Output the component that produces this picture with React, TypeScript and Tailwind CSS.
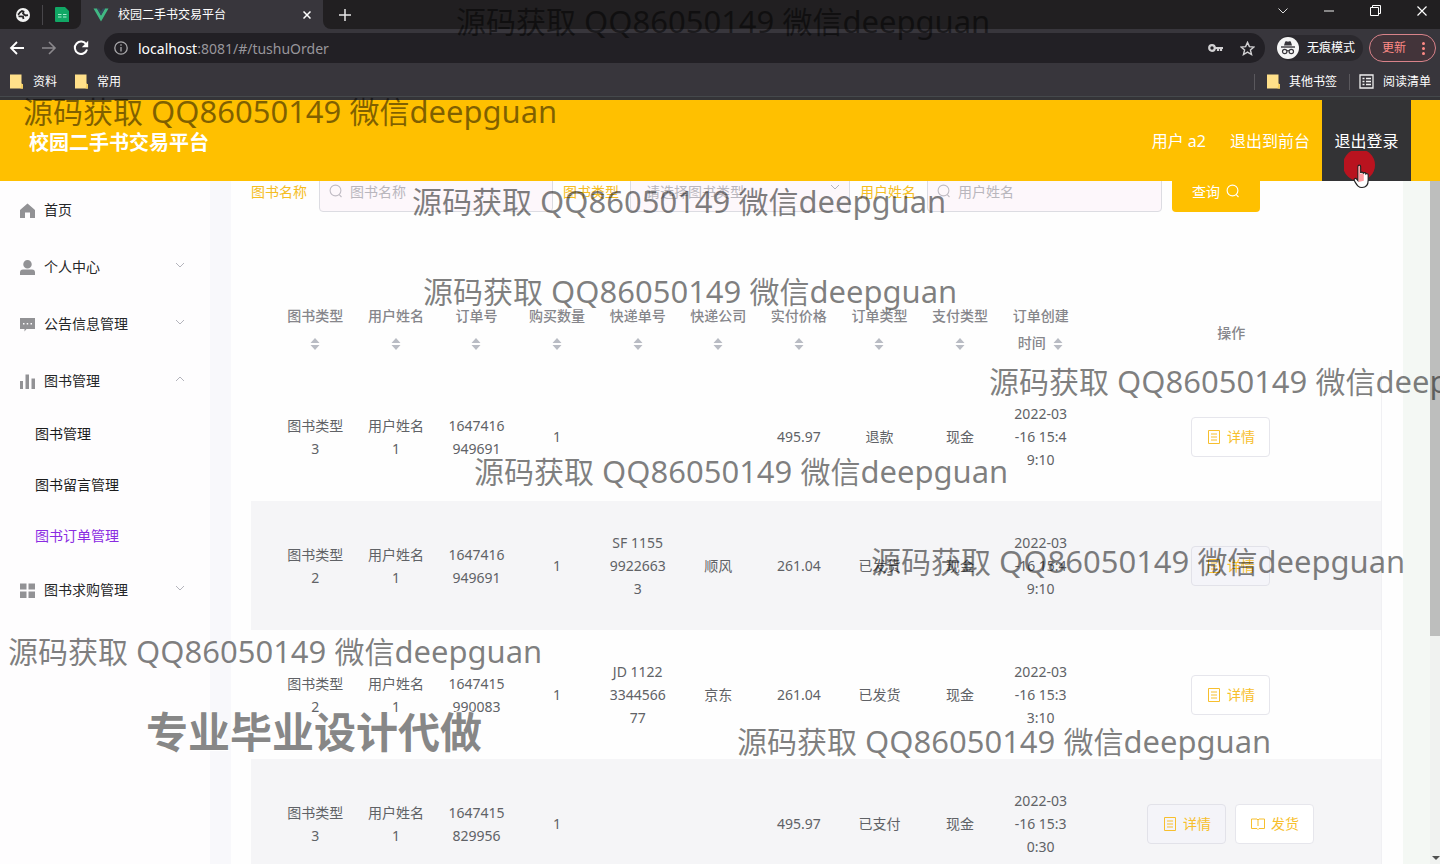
import React from "react";

const noticeSpots = [
  "left-[456px] top-[1px]",
  "left-[23px] top-[91px]",
  "left-[412px] top-[181px]",
  "left-[423px] top-[271px]",
  "left-[989px] top-[361px]",
  "left-[474px] top-[451px]",
  "left-[871px] top-[541px]",
  "left-[8px] top-[631px]",
  "left-[737px] top-[721px]",
];

type Order = {
  cells: string[][];
  ship?: boolean;
};

const columns: string[][] = [
  ["图书类型", ""],
  ["用户姓名", ""],
  ["订单号", ""],
  ["购买数量", ""],
  ["快递单号", ""],
  ["快递公司", ""],
  ["实付价格", ""],
  ["订单类型", ""],
  ["支付类型", ""],
  ["订单创建", "时间"],
];

const orders: Order[] = [
  {
    cells: [["图书类型", "3"], ["用户姓名", "1"], ["1647416", "949691"], ["1"], [], [], ["495.97"], ["退款"], ["现金"], ["2022-03", "-16 15:4", "9:10"]],
  },
  {
    cells: [["图书类型", "2"], ["用户姓名", "1"], ["1647416", "949691"], ["1"], ["SF 1155", "9922663", "3"], ["顺风"], ["261.04"], ["已发货"], ["现金"], ["2022-03", "-16 15:4", "9:10"]],
  },
  {
    cells: [["图书类型", "2"], ["用户姓名", "1"], ["1647415", "990083"], ["1"], ["JD 1122", "3344566", "77"], ["京东"], ["261.04"], ["已发货"], ["现金"], ["2022-03", "-16 15:3", "3:10"]],
  },
  {
    cells: [["图书类型", "3"], ["用户姓名", "1"], ["1647415", "829956"], ["1"], [], [], ["495.97"], ["已支付"], ["现金"], ["2022-03", "-16 15:3", "0:30"]],
    ship: true,
  },
];

function Folder() {
  return (
    <svg width="13" height="15" viewBox="0 0 13 15" aria-hidden="true">
      <path d="M0 0.5h11.5v9l1.5 1v4H0z" fill="#ffe08a" />
      <path d="M11.5 9.5l1.5 1v4h-2.500z" fill="#f3cd62" />
    </svg>
  );
}

function Search({ size = 14 }: { size?: number }) {
  return (
    <svg width={size} height={size} viewBox="0 0 14 14" fill="none" stroke="currentColor" strokeWidth="1.1" aria-hidden="true">
      <circle cx="6.500" cy="6.500" r="5.400" />
      <path d="M10.200 10.600l2.300 2.400" />
    </svg>
  );
}

function Caret({ up = false }: { up?: boolean }) {
  return (
    <svg width="10" height="6" viewBox="0 0 10 6" fill="none" stroke="#b4b4bc" strokeWidth="1" className="mb-1" aria-hidden="true">
      <path d={up ? "M1 5l4-4 4 4" : "M1 1l4 4 4-4"} />
    </svg>
  );
}

function Sorter() {
  return (
    <svg width="10" height="12" viewBox="0 0 10 12" fill="#b9bcc4" className="inline-block" aria-hidden="true">
      <path d="M5 0l4.500 5h-9zM5 12L0.500 7h9z" />
    </svg>
  );
}

function BrowserBar() {
  return (
    <header className="flex h-[100px] shrink-0 flex-col bg-[#38363c] text-[12px] text-white">
      <div className="flex h-[29px] items-stretch bg-[#38363c]">
        <div className="flex w-[81px] items-center rounded-br-lg bg-[#211f21] pl-4">
          <svg width="14" height="14" viewBox="0 0 14 14" aria-hidden="true">
            <circle cx="7" cy="7" r="7" fill="#f4f4f4" />
            <path d="M1.800 6.500c1-.2 1.700-1 2-2L6 3l1.500.5L7 5.500 9.500 7.500 12 7.200M2.500 8.500c2-.5 3 .2 4.500 0l.5 2.500" fill="none" stroke="#262426" strokeWidth="1.800" />
          </svg>
          <div className="ml-3 h-5 w-px bg-[#48464a]" />
          <svg width="14" height="15" viewBox="0 0 14 15" className="ml-3" aria-hidden="true">
            <path d="M1 0h9l4 4v11H1a1 1 0 0 1-1-1V1a1 1 0 0 1 1-1z" fill="#11a765" />
            <path d="M3 7.500h3.500M8 7.500h3.500M3 10h3.500M8 10h3.500" stroke="#a8efd0" strokeWidth="1.200" />
          </svg>
        </div>
        <div className="flex w-[242px] items-center bg-[#38363c] pl-3">
          <svg width="16" height="14" viewBox="0 0 16 14" aria-hidden="true">
            <path d="M0.500 0.500H4L8 7.500l4-7h3.500L8 13.500z" fill="#41b883" />
            <path d="M4 0.500h2.200L8 3.600 9.800.5H12l-4 7z" fill="#35495e" />
          </svg>
          <span className="ml-[9px] flex-1">校园二手书交易平台</span>
          <button aria-label="关闭标签页" className="mr-3">
            <svg width="8" height="8" viewBox="0 0 8 8" stroke="#fff" strokeWidth="1.500"><path d="M0.500 0.500l7 7M7.500 0.500l-7 7" /></svg>
          </button>
        </div>
        <div className="flex flex-1 items-center rounded-bl-lg bg-[#211f21] pl-4">
          <button aria-label="新标签页">
            <svg width="12" height="12" viewBox="0 0 12 12" stroke="#e6e6e6" strokeWidth="1.500"><path d="M6 0v12M0 6h12" /></svg>
          </button>
          <div className="flex-1" />
          <div className="flex items-center gap-9 pr-[13px] pb-2">
            <button aria-label="搜索标签页"><svg width="10" height="6" viewBox="0 0 10 6" fill="none" stroke="#ddd"><path d="M0.500 0.500L5 5l4.500-4.500" /></svg></button>
            <button aria-label="最小化"><svg width="10" height="2" viewBox="0 0 10 2"><path d="M0 1h10" stroke="#eee" /></svg></button>
            <button aria-label="还原"><svg width="11" height="11" viewBox="0 0 11 11" fill="none" stroke="#fff"><path d="M0.500 2.500h8v8h-8zM2.500 2.500v-2h8v8h-2" /></svg></button>
            <button aria-label="关闭"><svg width="10" height="10" viewBox="0 0 10 10" stroke="#fff" strokeWidth="1.200"><path d="M0.500 0.500l9 9M9.500 0.500l-9 9" /></svg></button>
          </div>
        </div>
      </div>
      <div className="flex h-[38px] items-center pl-[9px] pr-1">
        <button aria-label="后退"><svg width="16" height="14" viewBox="0 0 16 14" fill="none" stroke="#fff" strokeWidth="1.800"><path d="M15 7H2M8 1L2 7l6 6" /></svg></button>
        <button aria-label="前进" className="ml-4"><svg width="16" height="14" viewBox="0 0 16 14" fill="none" stroke="#8b898d" strokeWidth="1.600"><path d="M1 7h13M8 1l6 6-6 6" /></svg></button>
        <button aria-label="刷新" className="ml-4"><svg width="16" height="16" viewBox="0 0 16 16"><path d="M13.300 4.500A6.200 6.200 0 1 0 14 9.500" fill="none" stroke="#fff" strokeWidth="2" /><path d="M15.200 0.800v6.400H8.800z" fill="#fff" /></svg></button>
        <div className="ml-[15px] flex h-[30px] flex-1 items-center rounded-full bg-[#222025] pl-[10px] pr-[10px]">
          <svg width="14" height="14" viewBox="0 0 14 14" fill="none" stroke="#a9a8ab" strokeWidth="1.300" aria-hidden="true"><circle cx="7" cy="7" r="6.200" /><path d="M7 6v4.500M7 3.300v1.500" /></svg>
          <p className="ml-[10px] flex-1 text-[14px] text-[#98969b]"><span className="text-white">localhost</span>:8081/#/tushuOrder</p>
          <svg width="15" height="10" viewBox="0 0 15 10" aria-hidden="true"><circle cx="4" cy="5" r="2.800" fill="none" stroke="#d2d1d3" strokeWidth="2.200" /><path d="M7 5h8M10 5v3M13 5v3" stroke="#d2d1d3" strokeWidth="2.200" /></svg>
          <svg width="15" height="15" viewBox="0 0 16 16" fill="none" stroke="#d2d1d3" strokeWidth="1.500" className="ml-[17px]" aria-hidden="true"><path d="M8 1.500l2 4.500 4.800.4-3.700 3.200 1.200 4.800L8 11.800l-4.300 2.600 1.200-4.800L1.200 6.400 6 6z" /></svg>
        </div>
        <div className="ml-3 flex h-[26px] items-center rounded-full bg-[#2b292e] pr-2">
          <svg width="22" height="22" viewBox="0 0 22 22" aria-hidden="true">
            <circle cx="11" cy="11" r="11" fill="#f5f5f5" />
            <path d="M7 8.500l1.200-4 1.500-.3 1.300.5 1.300-.5 1.500.3L15 8.500z" fill="#38363c" />
            <path d="M4 10h14" stroke="#38363c" strokeWidth="1.400" />
            <g fill="none" stroke="#38363c" strokeWidth="1.200"><circle cx="7.700" cy="14.500" r="2.200" /><circle cx="14.300" cy="14.500" r="2.200" /><path d="M10 14q1-.7 2 0" /></g>
          </svg>
          <span className="ml-2">无痕模式</span>
        </div>
        <button className="ml-[6px] flex h-[28px] w-[67px] items-center justify-between rounded-full border border-[#d9838a] bg-[#43343a] pl-3 pr-[10px] text-[#ff8a86]">
          更新
          <svg width="3" height="13" viewBox="0 0 3 13" fill="#ff8a86" aria-hidden="true"><circle cx="1.500" cy="1.500" r="1.500" /><circle cx="1.500" cy="6.500" r="1.500" /><circle cx="1.500" cy="11.500" r="1.500" /></svg>
        </button>
      </div>
      <div className="flex h-[29px] items-center pl-[10px] pr-[9px]">
        <Folder /><a href="#a" className="ml-[10px]">资料</a>
        <span className="w-[18px]" />
        <Folder /><a href="#b" className="ml-[9px]">常用</a>
        <div className="flex-1" />
        <span className="mr-3 h-4 w-px bg-[#5a585d]" />
        <Folder /><a href="#c" className="ml-[9px]">其他书签</a>
        <span className="ml-3 mr-[9px] h-4 w-px bg-[#5a585d]" />
        <svg width="15" height="15" viewBox="0 0 15 15" fill="none" stroke="#f0f0f0" strokeWidth="1.300" aria-hidden="true"><path d="M1 1h13v13H1zM3.500 4.500h2M7 4.500h5M3.500 7.500h2M7 7.500h5M3.500 10.500h2M7 10.500h5" /></svg>
        <a href="#d" className="ml-[9px]">阅读清单</a>
      </div>
      <div className="h-1 border-t border-[#45494c] bg-[#343438]" />
    </header>
  );
}

const menuIcons: Record<string, React.ReactNode> = {
  home: <path d="M7.500 0.500L0 7v8h5V9.500h5V15h5V7z" />,
  user: <path d="M7.500 0a4 4 0 0 1 0 8.500 4 4 0 0 1 0-8.500zM3 9.500h9a3 3 0 0 1 3 3V15H0v-2.500a3 3 0 0 1 3-3z" />,
  chat: <path fillRule="evenodd" d="M0 1h15v11H6.500L4.500 14.500V12H0zM3 6v1.500h1.500V6zM6.700 6v1.500h1.500V6zM10.500 6v1.500H12V6z" />,
  chart: <path d="M0 7h3v8H0zM5.500 0.500h3.500V15H5.500zM11.500 4.500H15V15h-3.500z" />,
  grid: <path d="M0 0.500h6.500V6.500H0zM8.500 0.500H15V6.500H8.500zM0 8.500h6.500V15H0zM8.500 8.500H15V15H8.500z" />,
};

function MenuRow({ icon, label, state }: { icon: string; label: string; state?: "open" | "closed" }) {
  return (
    <button className="flex h-[57px] w-full items-center pl-5 pr-[25px] text-left text-[14px] text-[#252628]">
      <svg width="15" height="15" viewBox="0 0 15 15" fill="#929295" className="mt-[2px]" aria-hidden="true">{menuIcons[icon]}</svg>
      <span className="ml-[9px] flex-1">{label}</span>
      {state && <Caret up={state === "open"} />}
    </button>
  );
}

function Sidebar() {
  return (
    <nav className="w-[210px] shrink-0 bg-[#fefdfe]">
      <MenuRow icon="home" label="首页" />
      <MenuRow icon="user" label="个人中心" state="closed" />
      <MenuRow icon="chat" label="公告信息管理" state="closed" />
      <MenuRow icon="chart" label="图书管理" state="open" />
      <div className="-mt-px flex flex-col text-[14px] text-[#1c1c1c]">
        <a href="#books" className="flex h-[51px] items-center pl-[35px]">图书管理</a>
        <a href="#notes" className="flex h-[51px] items-center pl-[35px]">图书留言管理</a>
        <a href="#orders" className="flex h-[51px] items-center pl-[35px] text-[#8a2be2]">图书订单管理</a>
      </div>
      <MenuRow icon="grid" label="图书求购管理" state="closed" />
    </nav>
  );
}

function Filters() {
  const field = "h-10 w-full rounded border border-[#dcdce2] bg-[#fdf7fb] pb-[2px] pl-[30px] text-[14px] text-[#b9b6bd] placeholder:text-[#b9b6bd]";
  return (
    <form className="flex items-center text-[14px] text-[#f5bd23]">
      <label htmlFor="book" className="w-[68px] pb-[2px]">图书名称</label>
      <div className="relative w-[234px] text-[#c0bcc4]">
        <input id="book" placeholder="图书名称" className={field} />
        <span className="absolute left-[10px] top-[12px]"><Search /></span>
      </div>
      <label htmlFor="kind" className="ml-[10px] w-[67px] pb-[2px]">图书类型</label>
      <div className="relative w-[220px] text-[#c0bcc4]">
        <select id="kind" className="h-10 w-full appearance-none rounded border border-[#dcdce2] bg-[#fdf7fb] pb-[2px] pl-[15px] text-[14px] text-[#b9b6bd]">
          <option>请选择图书类型</option>
        </select>
        <span className="absolute right-[10px] top-[12px]"><Caret /></span>
      </div>
      <label htmlFor="person" className="ml-[10px] w-[67px] pb-[2px]">用户姓名</label>
      <div className="relative w-[235px] text-[#c0bcc4]">
        <input id="person" placeholder="用户姓名" className={field} />
        <span className="absolute left-[10px] top-[12px]"><Search /></span>
      </div>
      <button type="button" className="ml-[10px] flex h-10 w-[88px] items-center justify-center gap-[6px] rounded bg-[#ffc000] pb-[2px] text-white">
        查询 <Search />
      </button>
    </form>
  );
}

function RowButton({ label, book = false, className }: { label: string; book?: boolean; className: string }) {
  return (
    <button className={"flex h-10 w-[79px] items-center justify-center gap-[6px] rounded border text-[14px] text-[#f7bf2e] " + className}>
      <svg width="14" height="14" viewBox="0 0 14 14" fill="none" stroke="currentColor" strokeWidth="1" aria-hidden="true">
        {book ? <path d="M0.500 2h5.500l1 1 1-1h5.500v9.500H8l-1 1-1-1H0.500zM7 3v6" /> : <path d="M1.500 0.500h11v13h-11zM4 4h6M4 7h6M4 10h6" />}
      </svg>
      {label}
    </button>
  );
}

function OrderTable() {
  return (
    <table className="mt-[81px] w-full table-fixed border-collapse text-center text-[14px] leading-[23px] text-[#606266]">
      <colgroup>
        <col className="w-[24px]" />
        {columns.map((c) => <col key={c[0]} className="w-[7.13%]" />)}
        <col />
      </colgroup>
      <thead>
        <tr className="h-[79px] text-[#86868b]">
          <td />
          {columns.map((c) => (
            <th key={c[0]} className="pb-[7px] font-medium leading-[27px]">
              {c[0]}<br />
              {c[1] && <span className="mr-1">{c[1]}</span>} <Sorter />
            </th>
          ))}
          <th className="font-medium">操作</th>
        </tr>
      </thead>
      <tbody>
        {orders.map((order, i) => (
          <tr key={i} className="h-[129px] border-r border-[#f0f0f3] odd:bg-[#fefefe] even:bg-[#f5f5f7]">
            <td />
            {order.cells.map((lines, j) => (
              <td key={j}>{lines.map((line) => <div key={line}>{line}</div>)}</td>
            ))}
            <td>
              <div className="flex justify-center gap-[9px]">
                <RowButton label="详情" className={i % 2 ? "border-[#e2e2e9] bg-[#f4f4f9]" : "border-[#e6e6ec] bg-white"} />
                {order.ship && <RowButton label="发货" book className="border-[#e6e6ec] bg-white" />}
              </div>
            </td>
          </tr>
        ))}
      </tbody>
    </table>
  );
}

export default function App() {
  return (
    <div className="relative flex h-screen flex-col overflow-hidden bg-white font-['Noto_Sans','Noto_Sans_CJK_SC',sans-serif]">
      <BrowserBar />
      <header className="flex h-[81px] shrink-0 items-center bg-[#ffc000] pl-[29px] pr-[29px] text-[16px] text-white">
        <h1 className="flex-1 pt-1 text-[20px] font-bold">校园二手书交易平台</h1>
        <span>用户 a2</span>
        <a href="#front" className="ml-6">退出到前台</a>
        <a href="#logout" className="ml-3 flex h-full w-[89px] items-center justify-center bg-[#333335]">退出登录</a>
      </header>
      <div className="flex min-h-0 flex-1">
        <Sidebar />
        <div className="flex min-w-0 flex-1 bg-[#f8f8fb] pl-[21px]">
          <main className="min-w-0 flex-1 overflow-hidden bg-[#fefefe] pl-5 pr-[21px]">
            <div className="-mt-[9px]">
              <Filters />
              <OrderTable />
            </div>
          </main>
          <div className="w-[27px] bg-[#f4f8f4]" />
        </div>
        <div className="flex w-[10px] flex-col justify-between bg-[#f0f2f0]">
          <div className="h-2/3 bg-[#bdbebd]" />
          <svg width="10" height="10" viewBox="0 0 10 10" aria-hidden="true"><path d="M2 2h8L6 6z" fill="#505050" /></svg>
        </div>
      </div>

      <div className="pointer-events-none absolute inset-0 overflow-hidden">
        <svg width="32" height="38" viewBox="0 0 32 38" className="absolute left-[1344px] top-[151px]" aria-hidden="true">
          <circle cx="15" cy="14" r="16" fill="#c4101d" opacity="0.920" />
          <path d="M14 15.500c0-1.800 2.600-1.800 2.600 0V22c.5-1.300 2.500-1.200 2.700.3.600-1 2.500-.8 2.600.6.800-.7 2.300-.2 2.300 1.100v5c0 4-1.800 7.500-6.200 7.500-4 0-5-2.500-7.500-6.500-1.300-2 .8-3.300 2.200-1.800l1.300 1.500z" fill="#fff" stroke="#222" strokeWidth="1.200" />
          <path d="M14.600 16c0-1.200 1.500-1.200 1.500 0v7h1.200c.2-1.200 1.400-1 1.500.2h1v6.500l-5.200 1.200z" fill="#ff9ca0" />
        </svg>
        {noticeSpots.map((spot) => (
          <p key={spot} className={"absolute whitespace-nowrap text-[30px] leading-[40px] text-black/50 " + spot}>
            源码获取<span className="text-[31px]"> QQ86050149 </span>微信<span className="text-[31px]">deepguan</span>
          </p>
        ))}
        <p className="absolute left-[146px] top-[702px] whitespace-nowrap text-[42px] font-bold leading-[60px] text-[#878787] [text-shadow:0_0_2px_#fff,1px_1px_1px_#fff,-1px_-1px_1px_#fff]">专业毕业设计代做</p>
      </div>
    </div>
  );
}
